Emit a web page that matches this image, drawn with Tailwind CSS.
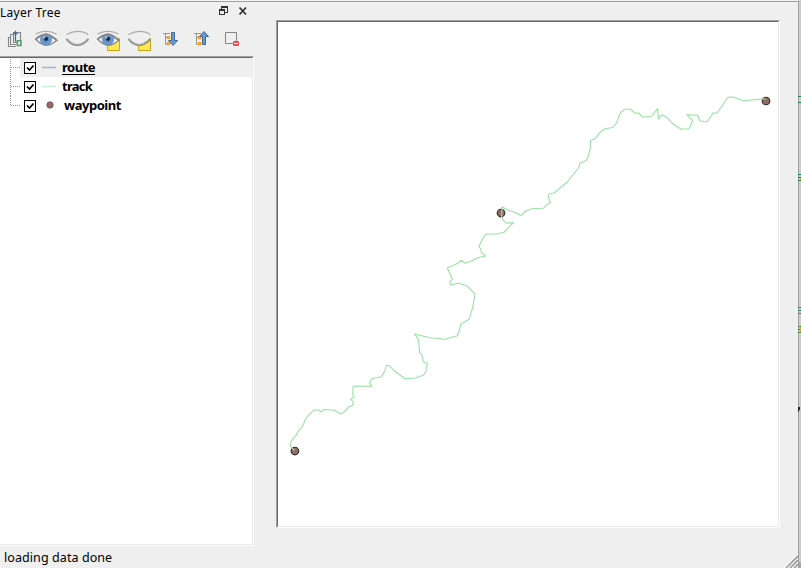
<!DOCTYPE html>
<html lang="en">
<head>
<meta charset="utf-8">
<title>Layer Tree</title>
<script src="https://cdn.jsdelivr.net/npm/@tailwindcss/browser@4"></script>
</head>
<body class="w-[801px] h-[568px] overflow-hidden bg-[#efefef] text-black text-[13px] font-['Noto_Sans',sans-serif]">
<div class="flex w-[801px] h-[568px]">
  <div class="relative flex flex-col w-[798px] h-full">
    <div class="h-px bg-[#f3f3f3]"></div>
    <div class="h-px bg-[#a0a0a0]"></div>
    <div class="flex h-[544px]">
      <section class="flex flex-col w-[254px]">
        <header class="flex items-center h-[21px]">
          <h1 class="w-[218px] text-[12px] leading-[21px] tracking-[0.25px]">Layer Tree</h1>
          <svg class="w-[36px] h-[21px]" viewBox="218 2 36 21" fill="none" stroke="#303030" shape-rendering="crispEdges">
            <path d="M221.500 9V6.500H227.500V12.500H225M221 7.500H228" />
            <path d="M219.500 9.500H224.500V14.500H219.500ZM219 10.500H225" />
            <path d="M239.500 7.500L246 14.500M246 7.500L239.500 14.500" stroke-width="1.800" shape-rendering="auto"/>
          </svg>
        </header>
        <div class="flex h-[33px]">
          <svg class="w-[254px] h-[33px]" viewBox="0 23 254 33" fill="none">
            <defs>
              <radialGradient id="iris"><stop offset="0" stop-color="#45698f"/><stop offset=".4" stop-color="#5c8bc2"/><stop offset="1" stop-color="#7ca5d9"/></radialGradient>
              <g id="eye">
                <path d="M36 39.500Q45 31 56.500 40.500Q46 50 36 39.500Z" fill="#f8f8f8" stroke="#858585" stroke-width="1.200"/>
                <path d="M35.500 34Q46 28.500 56.500 34" stroke="#a6a6a0" stroke-width="1.200"/>
                <circle cx="46" cy="39.500" r="5.600" fill="url(#iris)" stroke="#5584b7" stroke-width=".8"/>
                <circle cx="46" cy="38.800" r="2" fill="#152636"/><circle cx="44.500" cy="37.500" r=".9" fill="#cce2f7"/>
                <path d="M35 39.500Q40 34.500 46 34.200Q52 34.500 57.500 41" stroke="#858585" stroke-width="1.200"/>
              </g>
              <g id="closed">
                <path d="M66.500 34.500Q77 29 87 33.500L88 35" stroke="#aaaaa5" stroke-width="1.200"/>
                <path d="M66.500 39Q77 51 88.500 39" stroke="#858885" stroke-width="1.900"/>
                <path d="M67.500 39.500Q77 49.500 87.500 39.500" stroke="#d0d2cf" stroke-width=".7"/>
              </g>
              <g id="nodes">
                <path d="M163 33.500H170M165.500 33V44.500H169M165.500 37.500H169" stroke="#969696"/>
                <path d="M167.500 36.500H169.500V38.500H167.500ZM167.500 42.500H169.500V44.500H167.500Z" fill="#ffe4ad" stroke="#ff9418" stroke-width="1.200"/>
              </g>
            </defs>
            <g stroke="#858585" stroke-width="1.100">
              <path d="M10.500 37.500H8.500V46.500H16M13 34.500H10.500V44.500H16M16.500 32.500H20.500V40M15 32.500H13.500V42.500H17"/>
              <path d="M13.500 34.500L15.500 31.500L17.500 34.500M15.500 32V41.500" stroke="#3f6994" stroke-width="1.200"/>
              <path d="M17.300 40.800H21V45.500H17.300Z" fill="#e6f6ed" stroke="#5c9c73" stroke-width="1.600"/>
            </g>
            <use href="#eye"/>
            <use href="#closed"/>
            <path d="M107.500 41.500L119.500 38.500V50.500H107.500Z" fill="#ffe84d" stroke="#c7a51c"/>
            <use href="#eye" x="62"/>
            <path d="M138.500 46L150.500 38.500V50.500H138.500Z" fill="#ffe84d" stroke="#c7a51c"/>
            <path d="M128.500 38.500L139 46L150 38V34H128Z" fill="#efefef"/>
            <use href="#closed" x="62"/>
            <use href="#nodes"/><use href="#nodes" x="31"/>
            <path d="M171.500 32.500H174.500V40.500H177.500L173 45.500L168.500 40.500H171.500Z" fill="#6b99c9" stroke="#3d699c"/>
            <path d="M202.500 44.500H205.500V36.500H208.500L204 31.500L199.500 36.500H202.500Z" fill="#6b99c9" stroke="#3d699c"/>
            <path d="M225.500 32.500H236.500V43.500H225.500Z" stroke="#858585"/>
            <rect x="233" y="41" width="6" height="5" rx="1.200" fill="#ed4c52"/><path d="M234 43.500H238" stroke="#fff"/>
          </svg>
        </div>
        <div class="flex flex-col h-[490px] border-t border-t-[#a0a0a0] border-r border-r-white border-b border-b-white">
          <div class="flex flex-col h-[488px] bg-white border-t border-t-[#696969] border-r border-r-[#e9e9e9] border-b border-b-[#e9e9e9] text-[13px] font-bold leading-[19px]">
            <div class="flex h-[19px]">
              <svg class="w-[20px] h-[19px]" viewBox="0 0 20 19"><path d="M10.500 1V19M11 9.500H20" stroke="#969696" stroke-dasharray="1 1"/></svg>
              <div class="flex w-[232px] bg-[#efefef]">
                <svg class="w-[42px] h-[19px]" viewBox="20 58 42 19" fill="none"><rect x="24.500" y="62.500" width="11" height="11" fill="#fff" stroke="#000"/><path d="M27 67.500L29.500 70L33.500 65.500" stroke="#000" stroke-width="1.700"/><path d="M42 67.500H56" stroke="#a7b1cf" stroke-width="1.500"/></svg>
                <span class="underline underline-offset-2 decoration-1 tracking-[-0.5px]">route</span>
              </div>
            </div>
            <div class="flex h-[19px]">
              <svg class="w-[62px] h-[19px]" viewBox="0 77 62 19" fill="none"><path d="M10.500 77V96M11 86.500H20" stroke="#969696" stroke-dasharray="1 1"/><rect x="24.500" y="81.500" width="11" height="11" stroke="#000"/><path d="M27 86.500L29.500 89L33.500 84.500" stroke="#000" stroke-width="1.700"/><path d="M42 86.500H56" stroke="#c9f0cf" stroke-width="1.500"/></svg>
              <span class="tracking-[-0.75px]">track</span>
            </div>
            <div class="flex h-[19px]">
              <svg class="w-[64px] h-[19px]" viewBox="0 96 64 19" fill="none"><path d="M10.500 96V106M11 105.500H20" stroke="#969696" stroke-dasharray="1 1"/><rect x="24.500" y="100.500" width="11" height="11" stroke="#000"/><path d="M27 105.500L29.500 108L33.500 103.500" stroke="#000" stroke-width="1.700"/><circle cx="50" cy="105" r="3.200" fill="#956964" stroke="#6c5150" stroke-width=".8"/></svg>
              <span class="tracking-[-0.47px]">waypoint</span>
            </div>
          </div>
        </div>
      </section>
      <main class="w-[504px] h-[508px] ml-[22px] mt-[18px] border border-t-[#a0a0a0] border-l-[#a0a0a0] border-r-white border-b-white">
        <div class="w-full h-full bg-white border border-t-[#696969] border-l-[#696969] border-r-[#e9e9e9] border-b-[#e9e9e9]">
          <svg class="w-[500px] h-[504px]" viewBox="278 22 500 504" fill="none">
            <g fill="#956964" stroke="#302a2c" stroke-width="1.150"><circle cx="294.900" cy="451" r="3.800"/><circle cx="501" cy="213" r="3.800"/><circle cx="766" cy="101" r="3.800"/></g>
            <path stroke="#98e3a3" stroke-width="1.100" stroke-linejoin="round" d="M294.700 450.700L290.700 446.700 290 444 292.700 438.700 296 435.300 298.700 430.700 302.700 426 305.700 418.700 310 413.700 314.700 409.700 319 410.300 321.300 411.700 324.300 409.500 334.700 410.300 340.700 414 344 412 348.700 407 353 405 353.300 402.300 350.700 399 354.300 397.300 352.700 395 353 386.700 354.700 386 372 386.300 369.700 383.700 370.300 380.300 373.300 378.300 381 377 385 370.700 386.300 365.300 389 365.700 395 371.300 405 378.700 415 378 423.300 375.300 425.700 372 427.300 363.300 423.300 362 422.300 356 419.500 352.300 419.300 348 418.300 339.300 414.700 334 430 337.700 445 339.300 457.300 335.700 459 331 461 324 469 319.300 472.700 307.300 475 294 466.700 285.700 458.300 283.300 450.700 285 449.700 282.300 452.300 279 447.300 268 457.700 263.300 461.300 260.300 465 263.300 473.300 260.300 477.300 257.700 485.700 256 481.300 252.700 481 249.700 479 246.300 483 238 486 234 496.700 234 504.300 232 513.300 222.500 506.700 223.300 503.300 220.300 501.700 216.700 502 206.700 506 209.300 515 212.300 521 215.700 525.700 211 531.700 208.700 543.300 208.300 547.300 204.300 550.300 203 548.300 196.700 549 194 554 193 567.300 182 579 167 579.700 163.300 586 160.700 588 157.300 590.300 148.300 590.700 140.300 594.300 139.300 600 132.300 605 128.700 612.700 127.500 616.700 122.700 620 113.300 624.300 109.300 630.700 109.300 634.300 113 638.700 113 643 117.300 651.700 116 657.700 108.700 658.300 119 662 114.700 666.700 117.300 672.300 123.300 680.700 129 688.300 129 690 127 692.700 120.300 686.700 114.700 697.700 115.300 699.700 120.700 707 122 713.300 112.700 716.700 113.300 722 106 727.700 97.300 733.300 97 743.300 100.700 765.700 98.700"/>
          </svg>
        </div>
      </main>
    </div>
    <footer class="flex justify-between h-[22px]">
      <p class="pl-[4px] pt-[1px] text-[12.500px] leading-[21px] tracking-[0.08px]">loading data done</p>
      <svg class="w-[14px] h-[22px]" viewBox="784 546 14 22" fill="none"><path d="M785 568L798 555M789 568L798 559M793 568L798 563" stroke="#fff" stroke-width="1.500"/><path d="M786 568L798 556M790 568L798 560M794 568L798 564" stroke="#999" stroke-width="1.600"/></svg>
    </footer>
  </div>
  <svg class="w-[3px] h-[568px]" viewBox="798 0 3 568" shape-rendering="crispEdges">
    <path d="M798 0H801V568H798Z" fill="#cdcdcd"/><path d="M798 1H799V568H798Z" fill="#a0a0a0"/><path d="M799 562H801V568H799Z" fill="#aaa"/>
    <path d="M798 96H801V97H798ZM798 102H801V103H798ZM798 174H801V175H798ZM798 177H801V178H798ZM798 180H801V181H798Z" fill="#168442"/>
    <path d="M798 307H801V308H798ZM798 310H801V311H798ZM798 313H801V314H798Z" fill="#387d91"/>
    <path d="M798 326H801V327H798ZM798 329H801V330H798ZM798 332H801V333H798Z" fill="#3b8c31"/><path d="M800 327H801V332H800ZM800 178H801V180H800Z" fill="#c2b42d"/>
    <path d="M798 407H800V410H798ZM798 410H799V412H798Z" fill="#26283e"/>
  </svg>
</div>
</body>
</html>
